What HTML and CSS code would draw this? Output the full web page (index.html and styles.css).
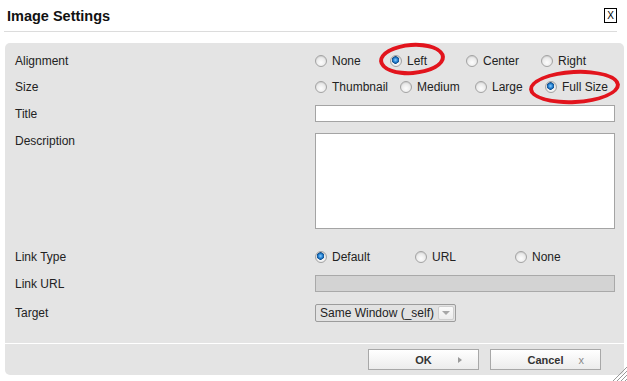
FILE: index.html
```html
<!DOCTYPE html>
<html lang="en">
<head>
    <meta charset="UTF-8">
    <title>Image Settings</title>
    <link rel="stylesheet" href="styles.css">
</head>
<body>
    <div class="dialog">
        <div class="dialog-head">
            <h1>Image Settings</h1>
            <span class="close">X</span>
        </div>

        <div class="panel">
            <div class="row row-radio">
                <span class="label">Alignment</span>
                <div class="options align-opts">
                    <label class="opt"><span class="radio"></span>None</label>
                    <label class="opt"><span class="radio on"></span>Left</label>
                    <label class="opt"><span class="radio"></span>Center</label>
                    <label class="opt"><span class="radio"></span>Right</label>
                </div>
            </div>
            <div class="row row-radio row-size">
                <span class="label">Size</span>
                <div class="options size-opts">
                    <label class="opt"><span class="radio"></span>Thumbnail</label>
                    <label class="opt"><span class="radio"></span>Medium</label>
                    <label class="opt"><span class="radio"></span>Large</label>
                    <label class="opt"><span class="radio on"></span>Full Size</label>
                </div>
            </div>
            <div class="row row-title">
                <span class="label">Title</span>
                <div class="text-input"></div>
            </div>
            <div class="row row-desc">
                <span class="label">Description</span>
                <div class="text-area"></div>
            </div>
            <div class="row row-radio row-link">
                <span class="label">Link Type</span>
                <div class="options link-opts">
                    <label class="opt"><span class="radio on"></span>Default</label>
                    <label class="opt"><span class="radio"></span>URL</label>
                    <label class="opt"><span class="radio"></span>None</label>
                </div>
            </div>
            <div class="row row-url">
                <span class="label">Link URL</span>
                <div class="text-input disabled"></div>
            </div>
            <div class="row row-target">
                <span class="label">Target</span>
                <div class="select">
                    <span class="select-text">Same Window (_self)</span>
                    <span class="select-arrow"></span>
                </div>
            </div>

            <div class="footer">
                <button class="btn">OK <span class="btn-icon arrow"></span></button>
                <button class="btn">Cancel <span class="btn-icon cross">x</span></button>
            </div>
        </div>

        <svg class="grip" width="16" height="16" viewBox="0 0 16 16">
            <line x1="16" y1="2" x2="2" y2="16" stroke="#9a9a9a" stroke-width="1"/>
            <line x1="16" y1="6" x2="6" y2="16" stroke="#9a9a9a" stroke-width="1"/>
            <line x1="16" y1="10" x2="10" y2="16" stroke="#9a9a9a" stroke-width="1"/>
            <line x1="16" y1="14" x2="14" y2="16" stroke="#9a9a9a" stroke-width="1"/>
        </svg>

        <!-- annotations drawn on the screenshot -->
        <div class="mark mark-left"></div>
        <div class="mark mark-full"></div>
    </div>
</body>
</html>
```

FILE: styles.css
```css
body {
    margin: 0;
    background: #fff;
    font-family: "Liberation Sans", Arial, sans-serif;
    font-size: 12px;
    color: #222;
}
.dialog {
    position: relative;
    width: 627px;
    height: 381px;
    overflow: hidden;
}
.dialog-head {
    display: flex;
    align-items: center;
    justify-content: space-between;
    height: 31px;
    margin: 0 10px 0 4px;
    padding-left: 3px;
    border-bottom: 1px solid #dcdcdc;
}
h1 {
    margin: 0;
    font-size: 14.5px;
    font-weight: bold;
    color: #111;
}
.close {
    width: 11px;
    height: 13px;
    border: 1px solid #000;
    font-size: 10px;
    line-height: 13px;
    text-align: center;
    color: #000;
}
.panel {
    margin: 11px 3px 0 5px;
    padding-top: 8px;
    background: #e4e4e4;
    border-radius: 5px;
}
.row {
    display: grid;
    grid-template-columns: 310px 300px;
    align-items: center;
}
.row-radio {
    height: 20px;
}
.label {
    padding-left: 10px;
}
.row-size { margin-top: 6px; }
.row-title { margin-top: 8px; }
.row-desc { margin-top: 11px; align-items: start; }
.row-desc .label { padding-top: 1px; }
.row-link { margin-top: 18px; }
.row-url { margin-top: 8px; }
.row-target { margin-top: 12px; }

.options {
    display: grid;
    align-items: center;
}
.align-opts { grid-template-columns: 75px 76px 75px auto; }
.size-opts { grid-template-columns: 85px 75px 70px auto; }
.link-opts { grid-template-columns: 100px 100px auto; }
.opt {
    display: flex;
    align-items: center;
    gap: 5px;
    white-space: nowrap;
}
.radio {
    width: 10px;
    height: 10px;
    border: 1px solid #a3a3a3;
    border-radius: 50%;
    background: radial-gradient(circle at 50% 65%, #fdfdfd 0%, #e9e9e9 60%, #d2d2d2 100%);
    box-shadow: inset 0 1px 1px rgba(0,0,0,0.08);
}
.radio.on {
    background:
        radial-gradient(circle at 45% 40%, #8fd0ff 0px, #2a86d6 2px, #0f4f8f 3.5px, transparent 4px),
        radial-gradient(circle at 50% 65%, #fdfdfd 0%, #e9e9e9 60%, #d2d2d2 100%);
}
.text-input {
    height: 15px;
    border: 1px solid #a4a4a4;
    background: #fff;
}
.text-input.disabled {
    background: #d3d3d3;
    border-color: #a9a9a9;
}
.text-area {
    height: 94px;
    border: 1px solid #a4a4a4;
    background: #fff;
}
.select {
    display: flex;
    align-items: center;
    justify-content: space-between;
    width: 139px;
    height: 16px;
    border: 1px solid #9c9c9c;
    border-radius: 2px;
    background: #e2e2e2;
}
.select-text {
    padding-left: 4px;
    color: #222;
}
.select-arrow {
    position: relative;
    width: 16px;
    height: 14px;
    margin-right: 1px;
    border: 1px solid #cfcfcf;
    border-radius: 2px;
    background: linear-gradient(#fafafa, #ececec);
    box-sizing: border-box;
}
.select-arrow::after {
    content: "";
    position: absolute;
    left: 3px;
    top: 4px;
    border-left: 4px solid transparent;
    border-right: 4px solid transparent;
    border-top: 4px solid #a6a6a6;
}
.footer {
    display: flex;
    justify-content: flex-end;
    gap: 11px;
    margin-top: 21px;
    padding: 5px 23px 5px 0;
    border-top: 1px solid #fff;
}
.btn {
    position: relative;
    width: 111px;
    height: 21px;
    border: 1px solid #a8a8a8;
    background: linear-gradient(#ffffff, #ececec);
    font-family: "Liberation Sans", Arial, sans-serif;
    font-size: 11px;
    font-weight: bold;
    color: #333;
    padding: 0;
}
.btn-icon {
    position: absolute;
    top: 0;
    bottom: 0;
    right: 14px;
    display: flex;
    align-items: center;
}
.btn-icon.arrow::after {
    content: "";
    margin-right: 2px;
    border-top: 3px solid transparent;
    border-bottom: 3px solid transparent;
    border-left: 4px solid #9a9a9a;
}
.btn-icon.cross {
    font-weight: normal;
    font-size: 11px;
    color: #8a8a8a;
    right: 16px;
}
.grip {
    position: absolute;
    right: 0;
    bottom: 0;
}
.mark {
    position: absolute;
    border: 4px solid #e2141d;
    border-radius: 50%;
    box-sizing: border-box;
}
.mark-left {
    left: 379px;
    top: 43px;
    width: 66px;
    height: 32px;
    transform: rotate(-4deg);
}
.mark-full {
    left: 529px;
    top: 70px;
    width: 91px;
    height: 34px;
    transform: rotate(-3deg);
}
```
